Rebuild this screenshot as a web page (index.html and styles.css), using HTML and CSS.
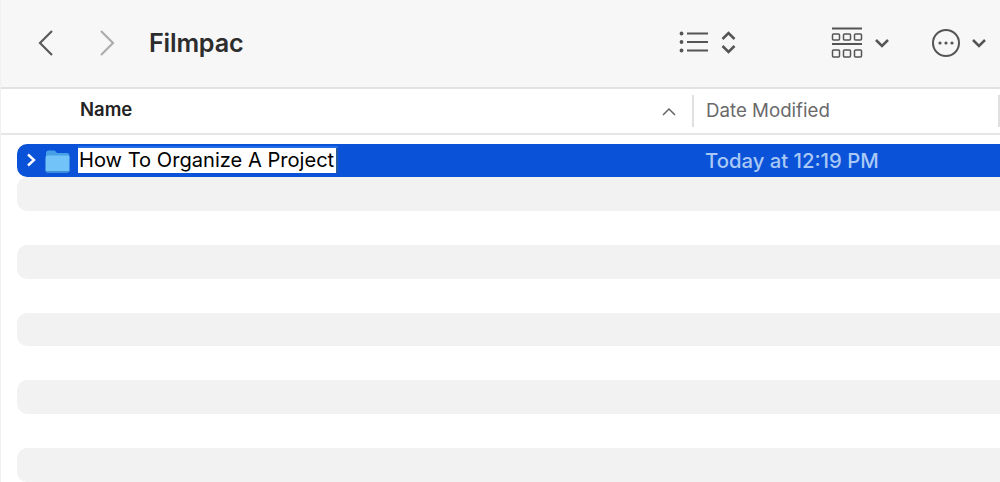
FILE: index.html
```html
<!DOCTYPE html>
<html lang="en">
<head>
<meta charset="utf-8">
<title>Filmpac</title>
<link rel="stylesheet" href="styles.css">
</head>
<body>
<div class="window">
  <header class="toolbar">
    <svg class="nav nav-back" width="18" height="28" viewBox="0 0 18 28"><path d="M15 2 3 14l12 12"/></svg>
    <svg class="nav nav-forward" width="18" height="28" viewBox="0 0 18 28"><path d="M3 2l12 12L3 26"/></svg>
    <h1 class="title">Filmpac</h1>
    <svg class="icon icon-list" width="58" height="26" viewBox="0 0 58 26">
      <circle cx="2.500" cy="4.500" r="1.900"/><circle cx="2.500" cy="13" r="1.900"/><circle cx="2.500" cy="21.500" r="1.900"/>
      <path class="rule" d="M8 4.500h21M8 13h21M8 21.500h21"/>
      <path class="line" d="M43.500 10l6-6 6 6M43.500 17l6 6 6-6"/>
    </svg>
    <svg class="icon icon-grid" width="60" height="32" viewBox="0 0 60 32">
      <path class="thin" d="M1 1.500h30M1 17h30"/>
      <rect class="box" x="1.500" y="7" width="7" height="6" rx="1"/><rect class="box" x="12.500" y="7" width="7" height="6" rx="1"/><rect class="box" x="23.500" y="7" width="7" height="6" rx="1"/>
      <rect class="box" x="1.500" y="23" width="7" height="7" rx="1"/><rect class="box" x="12.500" y="23" width="7" height="7" rx="1"/><rect class="box" x="23.500" y="23" width="7" height="7" rx="1"/>
      <path class="line" d="M45 13l6 6 6-6"/>
    </svg>
    <svg class="icon icon-more" width="56" height="30" viewBox="0 0 56 30">
      <circle class="ring" cx="14" cy="15" r="13"/>
      <circle cx="8" cy="15" r="1.600"/><circle cx="14" cy="15" r="1.600"/><circle cx="20" cy="15" r="1.600"/>
      <path class="line" d="M41 12l6 6 6-6"/>
    </svg>
  </header>
  <div class="columns">
    <div class="col-name">Name</div>
    <svg class="sort" width="14" height="8" viewBox="0 0 14 8"><path d="M1 7l6-6 6 6"/></svg>
    <div class="col-date">Date Modified</div>
  </div>
  <div class="rows">
    <div class="row row-selected">
      <svg class="disclosure" width="10" height="14" viewBox="0 0 10 14"><path d="M2 1.500 8 7l-6 5.500"/></svg>
      <svg class="folder" width="25" height="23" viewBox="0 0 25 23">
        <path d="M1 3C1 1.500 2 .5 3.500.5h5.200c1 0 1.500.4 2.200 1.200L12 3h10C23.500 3 24.500 4 24.500 5.500V8H1z" fill="#46a0e6"/>
        <rect x="0.500" y="5.500" width="24" height="17" rx="2" fill="#72c4f8"/>
        <path d="M.5 20.500c0 1.200.8 2 2 2h20c1.200 0 2-.8 2-2V21H.5z" fill="#3f8fd6"/>
      </svg>
      <div class="rename">How To Organize A Project</div>
      <div class="date">Today at 12:19 PM</div>
    </div>
    <div class="row row-alt"></div>
    <div class="row"></div>
    <div class="row row-alt"></div>
    <div class="row"></div>
    <div class="row row-alt"></div>
    <div class="row"></div>
    <div class="row row-alt"></div>
    <div class="row"></div>
    <div class="row row-alt"></div>
  </div>
</div>
</body>
</html>
```
FILE: styles.css
```css
* { box-sizing: border-box; }
html, body { margin: 0; height: 100%; overflow: hidden; background: #fff; }
body { font-family: "Inter", "Liberation Sans", sans-serif; }
.window { width: 1000px; height: 482px; border-left: 1px solid #f0f0f0; display: flex; flex-direction: column; overflow: hidden; }
.toolbar { height: 89px; flex: none; background: #f7f7f7; border-bottom: 2px solid #e2e2e2; display: flex; align-items: center; color: #555; }
.nav { flex: none; fill: none; stroke-width: 2.200; margin-top: -2px; }
.nav-back { margin-left: 36px; stroke: #5a5a5a; }
.nav-forward { margin-left: 43px; stroke: #adadad; }
.title { margin: 0 0 2px 33px; font-size: 25.200px; font-weight: 600; color: #2d2d2d; letter-spacing: -0.200px; flex: 1; }
.icon { flex: none; fill: #555; }
.line { fill: none; stroke: #555; stroke-width: 2.500; }
.rule { fill: none; stroke: #555; stroke-width: 2.200; }
.thin { fill: none; stroke: #555; stroke-width: 1.800; }
.box { fill: none; stroke: #555; stroke-width: 1.500; }
.ring { fill: none; stroke: #555; stroke-width: 2; }
.icon-list { margin-right: 94px; margin-top: -3px; margin-left: 1px; }
.icon-grid { margin-right: 41px; margin-top: -1px; }
.icon-more { margin-right: 12px; margin-top: -2px; }
.columns { height: 46px; flex: none; border-bottom: 2px solid #e6e6e6; display: flex; align-items: center; background: #fff; font-size: 17px; }
.col-name { margin: -4px 0 0 79px; flex: 1; font-weight: 600; color: #222; font-size: 18.500px; }
.sort { flex: none; fill: none; stroke: #666; stroke-width: 1.500; margin-right: 16px; margin-top: 2px; }
.col-date { width: 308px; height: 32px; flex: none; margin-top: -1px; padding-left: 12px; line-height: 32px; color: #6a6a6a; border-left: 2px solid #e0e0e0; border-right: 2px solid #e0e0e0; font-size: 18.700px; }
.rows { flex: 1; padding: 8.600px 0 0 15.500px; min-height: 0; }
.row { height: 33.800px; border-radius: 10px 0 0 10px; display: flex; align-items: center; margin-right: -4px; }
.row-alt { background: #f2f2f2; }
.row-selected { background: #0a53d8; }
.disclosure { flex: none; fill: none; stroke: #fff; stroke-width: 2.400; margin-left: 9.500px; }
.folder { flex: none; margin-left: 9px; margin-top: 2px; }
.rename { flex: none; width: 260px; height: 25px; margin-left: 8px; margin-top: 1px; padding-left: 1px; background: #fff; color: #000; font-size: 20.100px; line-height: 24px; white-space: nowrap; box-shadow: 0 -2px 0 #1f6ee8; border-right: 2px solid #2a5aa0; }
.date { margin-left: 367px; color: #a9c8f5; font-size: 20.300px; white-space: nowrap; font-weight: 500; }
```
